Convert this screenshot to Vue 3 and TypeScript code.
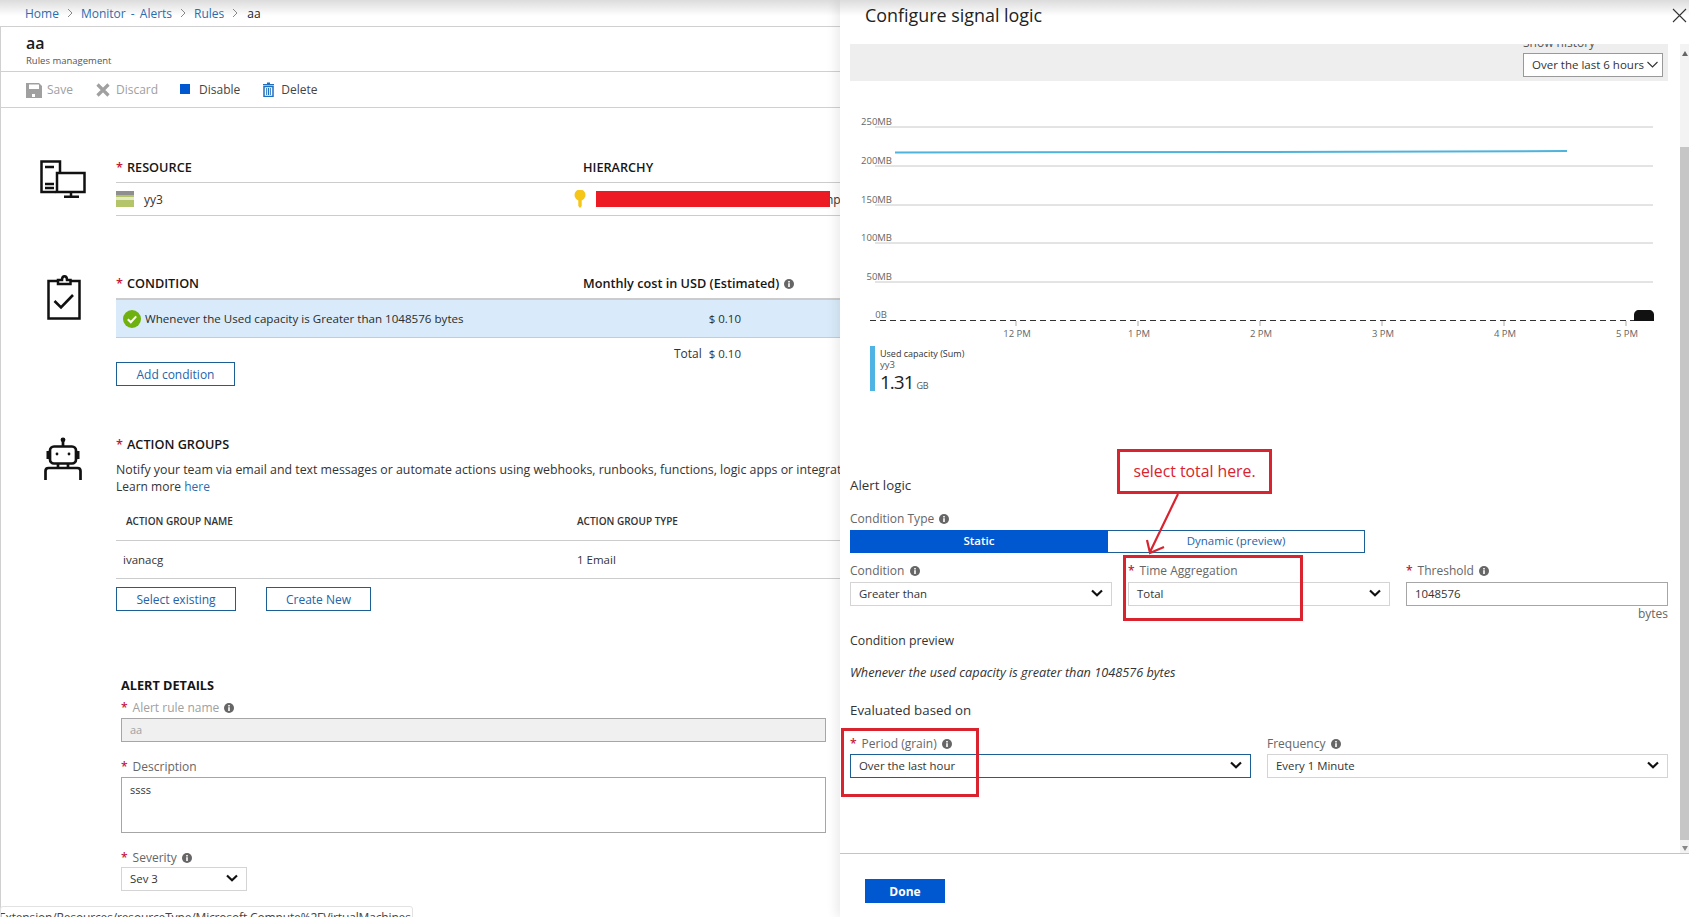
<script setup lang="ts">
const gridLines: { y: number; label: string }[] = [
  { y: 46, label: '250MB' },
  { y: 85, label: '200MB' },
  { y: 124, label: '150MB' },
  { y: 162, label: '100MB' },
  { y: 201, label: '50MB' }
]
const ticks: { x: number; label: string }[] = [
  { x: 167, label: '12 PM' },
  { x: 289, label: '1 PM' },
  { x: 411, label: '2 PM' },
  { x: 533, label: '3 PM' },
  { x: 655, label: '4 PM' },
  { x: 777, label: '5 PM' }
]
</script>

<template>
  <div class="root">
    <svg class="defs" width="0" height="0" aria-hidden="true">
      <symbol id="i-info" viewBox="0 0 10 10">
        <circle cx="5" cy="5" r="5" fill="#666" />
        <rect x="4.2" y="4.2" width="1.6" height="3.8" fill="#fff" />
        <rect x="4.2" y="2" width="1.6" height="1.5" fill="#fff" />
      </symbol>
      <symbol id="i-chev" viewBox="0 0 12 8">
        <path d="M1 1.5 L6 6.2 L11 1.5" fill="none" stroke="#111" stroke-width="2.2" />
      </symbol>
      <symbol id="i-crumb" viewBox="0 0 6 10">
        <path d="M1 1 L5 5 L1 9" fill="none" stroke="#888" stroke-width="1" />
      </symbol>
    </svg>

    <section class="left">
      <nav class="crumbs">
        <a>Home</a><svg class="cr"><use href="#i-crumb" /></svg><a>Monitor - Alerts</a><svg class="cr"><use href="#i-crumb" /></svg><a>Rules</a><svg class="cr"><use href="#i-crumb" /></svg><span>aa</span>
      </nav>
      <header class="head">
        <div class="title">aa</div>
        <div class="sub">Rules management</div>
      </header>
      <div class="toolbar">
        <span class="tool off save">
          <svg width="16" height="16" viewBox="0 0 16 16"><path d="M0 1h13l3 3v12H0z" fill="#a0a0a0" /><rect x="3" y="2.500" width="10" height="4.500" fill="#fff" /><rect x="6" y="12" width="3" height="3" fill="#fff" /></svg>
          Save
        </span>
        <span class="tool off discard">
          <svg width="14" height="14" viewBox="0 0 14 14"><path d="M1.500 1.500 L12.500 12.500 M12.500 1.500 L1.500 12.500" stroke="#a0a0a0" stroke-width="3.200" /></svg>
          Discard
        </span>
        <span class="tool disable"><b class="sq"></b>Disable</span>
        <span class="tool del">
          <svg width="11" height="15" viewBox="0 0 11 15"><path d="M4 0.500h3v1.500h4v1.300H0V2h4z" fill="#1f6fc0" /><path d="M1 4.500h9V14.500H1z" fill="none" stroke="#1f6fc0" stroke-width="1.500" /><path d="M3.700 6v7M5.500 6v7M7.300 6v7" stroke="#1f6fc0" stroke-width="1" /></svg>
          Delete
        </span>
      </div>

      <div class="sec sec-res">
        <div class="ico">
          <svg width="46" height="38" viewBox="0 0 46 38" fill="none" stroke="#111" stroke-width="2.500">
            <path d="M16 32H1.500V1.500H20V13" />
            <path d="M5 7h9M5 24h9M5 28h9" />
            <rect x="17" y="13" width="27.500" height="19" fill="#fff" />
            <path d="M31 32v4M24 36.800h15" />
          </svg>
        </div>
        <div class="body">
          <div class="hd"><span class="hcol"><em>*</em>RESOURCE</span><span>HIERARCHY</span></div>
          <div class="resrow">
            <span class="rescol">
              <svg width="18" height="16" viewBox="0 0 18 16"><rect width="18" height="16" fill="#b4c468" /><rect width="18" height="4" fill="#8f8f8f" /><rect y="6" width="18" height="3" fill="#e4ebc4" /></svg>
              <span>yy3</span>
            </span>
            <svg class="key" width="12" height="18" viewBox="0 0 12 18"><circle cx="6" cy="5" r="5.500" fill="#f5c518" /><path d="M4.300 8h3.400v8L6 18l-1.700-2z" fill="#f5c518" /></svg>
            <span class="redact"></span><span class="np">np</span>
          </div>
        </div>
      </div>

      <div class="sec sec-cond">
        <div class="ico">
          <svg width="34" height="46" viewBox="0 0 34 46" fill="none" stroke="#111" stroke-width="2.500">
            <path d="M11 7H1.500V44.500H32.500V7H23" />
            <path d="M11 10V6h4c0-5 5-5 5 0h3.500v4z" />
            <path d="M7.500 27l6.500 6.500L26 21" stroke-width="2.600" />
          </svg>
        </div>
        <div class="body">
          <div class="hd"><span class="hcol"><em>*</em>CONDITION</span><span>Monthly cost in USD (Estimated) <svg class="info"><use href="#i-info" /></svg></span></div>
          <div class="condrow">
            <svg width="18" height="18" viewBox="0 0 18 18"><circle cx="9" cy="9" r="9" fill="#6fb10f" /><path d="M4.800 9.200l3 3 5.400-5.800" fill="none" stroke="#fff" stroke-width="2" /></svg>
            <span class="condtext">Whenever the Used capacity is Greater than 1048576 bytes</span>
            <span class="cost">$ 0.10</span>
          </div>
          <div class="total"><span>Total</span><span class="price">$ 0.10</span></div>
          <button class="btn add">Add condition</button>
        </div>
      </div>

      <div class="sec sec-act">
        <div class="ico">
          <svg width="38" height="44" viewBox="0 0 38 44" fill="none" stroke="#111" stroke-width="2.700">
            <circle cx="19" cy="2.800" r="2.400" fill="#111" stroke="none" />
            <path d="M19 4v5" />
            <rect x="6" y="9.500" width="26" height="17" rx="4" />
            <circle cx="13" cy="17" r="1.400" fill="#111" stroke="none" />
            <circle cx="25" cy="17" r="1.400" fill="#111" stroke="none" />
            <path d="M4 14v8M34 14v8" stroke-width="3" />
            <path d="M14 27v4M24 27v4" />
            <path d="M1.500 43V34c0-2 1-3 3-3h29c2 0 3 1 3 3v9" />
          </svg>
        </div>
        <div class="body">
          <div class="hd plain"><span class="hcol"><em>*</em>ACTION GROUPS</span></div>
          <p class="notify">Notify your team via email and text messages or automate actions using webhooks, runbooks, functions, logic apps or integrating with external ITSM solutions.</p>
          <p class="learn">Learn more <a>here</a></p>
          <div class="thead"><span>ACTION GROUP NAME</span><span>ACTION GROUP TYPE</span></div>
          <div class="trow"><span>ivanacg</span><span>1 Email</span></div>
          <div class="btns">
            <button class="btn sel-ex">Select existing</button>
            <button class="btn create">Create New</button>
          </div>
        </div>
      </div>

      <div class="details">
        <div class="dhead">ALERT DETAILS</div>
        <div class="label first muted"><em>*</em>Alert rule name <svg class="info"><use href="#i-info" /></svg></div>
        <div class="field disabled">aa</div>
        <div class="label"><em>*</em>Description</div>
        <div class="field area">ssss</div>
        <div class="label"><em>*</em>Severity <svg class="info"><use href="#i-info" /></svg></div>
        <div class="sel sev"><span>Sev 3</span><svg class="chev"><use href="#i-chev" /></svg></div>
      </div>
    </section>

    <section class="right">
      <header class="r-head">
        <h1>Configure signal logic</h1>
        <svg class="close" width="15" height="15" viewBox="0 0 15 15"><path d="M1 1L14 14M14 1L1 14" stroke="#333" stroke-width="1.100" /></svg>
      </header>
      <div class="r-mid">
        <div class="r-content">
          <div class="band">
            <div class="band-col">
              <div class="hist">Show history</div>
              <div class="histsel"><span>Over the last 6 hours</span><svg width="11" height="7" viewBox="0 0 11 7"><path d="M0.500 1L5.500 6L10.500 1" fill="none" stroke="#333" stroke-width="1.100" /></svg></div>
            </div>
          </div>

          <svg class="chart" width="818" height="265" viewBox="0 0 818 265">
            <g v-for="g in gridLines" :key="g.label">
              <line x1="25" x2="803" :y1="g.y" :y2="g.y" stroke="#c8c8c8" />
              <text x="42" :y="g.y - 2" text-anchor="end" class="axis">{{ g.label }}</text>
            </g>
            <path d="M45 71.500 L400 71 L717 70" fill="none" stroke="#4fb3dc" stroke-width="2" />
            <line x1="20" x2="800" y1="239.500" y2="239.500" stroke="#333" stroke-dasharray="6 4" />
            <text x="31" y="237" class="axis" text-anchor="middle">0B</text>
            <g v-for="t in ticks" :key="t.label">
              <line :x1="t.x - 1" :x2="t.x - 1" y1="240" y2="245" stroke="#aaa" />
              <text :x="t.x" y="256" class="axis" text-anchor="middle">{{ t.label }}</text>
            </g>
            <path d="M784 234c0-3 2-5 5-5h10c3 0 5 2 5 5v6h-20z" fill="#111" />
          </svg>

          <div class="legend">
            <span class="lbar"></span>
            <div>
              <div class="l1">Used capacity (Sum)</div>
              <div class="l2">yy3</div>
              <div class="l3">1.31<small>GB</small></div>
            </div>
          </div>

          <div class="r-title alert">Alert logic</div>
          <div class="label ctype">Condition Type <svg class="info"><use href="#i-info" /></svg></div>
          <div class="toggle"><span class="on">Static</span><span class="offt">Dynamic (preview)</span></div>

          <div class="grid3">
            <div>
              <div class="label">Condition <svg class="info"><use href="#i-info" /></svg></div>
              <div class="sel"><span>Greater than</span><svg class="chev"><use href="#i-chev" /></svg></div>
            </div>
            <div>
              <div class="label"><em>*</em>Time Aggregation</div>
              <div class="sel"><span>Total</span><svg class="chev"><use href="#i-chev" /></svg></div>
            </div>
            <div>
              <div class="label"><em>*</em>Threshold <svg class="info"><use href="#i-info" /></svg></div>
              <div class="sel strong"><span>1048576</span></div>
              <div class="bytes">bytes</div>
            </div>
          </div>

          <div class="r-title preview">Condition preview</div>
          <div class="italic">Whenever the used capacity is greater than 1048576 bytes</div>
          <div class="r-title evald">Evaluated based on</div>

          <div class="grid2">
            <div>
              <div class="label"><em>*</em>Period (grain) <svg class="info"><use href="#i-info" /></svg></div>
              <div class="sel focus"><span>Over the last hour</span><svg class="chev"><use href="#i-chev" /></svg></div>
            </div>
            <div>
              <div class="label">Frequency <svg class="info"><use href="#i-info" /></svg></div>
              <div class="sel"><span>Every 1 Minute</span><svg class="chev"><use href="#i-chev" /></svg></div>
            </div>
          </div>
        </div>
        <div class="scrollbar">
          <span class="arr up"></span>
          <span class="thumb"></span>
          <span class="arr down"></span>
        </div>
      </div>
      <footer class="r-foot"><button class="done">Done</button></footer>
    </section>

    <div class="status">Extension/Resources/resourceType/Microsoft.Compute%2FVirtualMachines</div>

    <div class="note">select total here.</div>
    <div class="mark m-time"></div>
    <div class="mark m-period"></div>
    <svg class="arrow" width="50" height="70" viewBox="0 0 50 70">
      <path d="M39 1L11 59M8 47L11 60L25 54" fill="none" stroke="#d9232e" stroke-width="2.200" />
    </svg>
  </div>
</template>

<style>
html, body { margin: 0; padding: 0; background: #fff; }
</style>

<style scoped>
.root {
  position: relative;
  display: flex;
  width: 1689px;
  height: 917px;
  overflow: hidden;
  background: #fff;
  color: #333;
  font-family: "Open Sans", "Noto Sans", "Liberation Sans", sans-serif;
  font-size: 12px;
}
.defs { position: absolute; }
a { color: #2b6cb0; }
em { color: #c4183c; font-style: normal; font-weight: 600; margin-right: 5px; }
p { margin: 0; }

.left {
  width: 840px;
  flex: none;
  background: linear-gradient(#dcdcdc, #fff 16px);
  overflow: hidden;
}
.crumbs {
  height: 26px;
  border-bottom: 1px solid #d0d0d0;
  padding-left: 25px;
  display: flex;
  align-items: center;
  font-size: 12px;
  word-spacing: 2px;
}
.cr { width: 6px; height: 10px; margin: 0 8px; flex: none; }
.crumbs span { color: #222; margin-left: 1px; }
.head {
  height: 45px;
  box-sizing: border-box;
  border-bottom: 1px solid #d0d0d0;
  border-left: 1px solid #d0d0d0;
  padding: 6px 0 0 25px;
}
.title { font-size: 16px; line-height: 20px; font-weight: 600; color: #1a1a1a; }
.sub { font-size: 9.500px; line-height: 16px; color: #555; }
.toolbar {
  height: 36px;
  box-sizing: border-box;
  border-bottom: 1px solid #d0d0d0;
  border-left: 1px solid #d0d0d0;
  padding-left: 25px;
  display: flex;
  align-items: center;
  color: #444;
}
.tool { display: inline-flex; align-items: center; gap: 5px; margin-right: 23px; }
.tool.off { color: #a0a0a0; }
.tool.disable { margin-left: 1px; gap: 9px; margin-right: 23px; }
.tool.discard { gap: 6px; margin-right: 21px; }
.tool.del { gap: 7px; }
.sq { width: 10px; height: 10px; background: #0058d1; margin-top: -2px; }

.sec { display: flex; border-left: 1px solid #d0d0d0; }
.ico { width: 115px; flex: none; box-sizing: border-box; }
.body { width: 724px; flex: none; }
.sec-res { padding-top: 47px; height: 62px; }
.sec-res .ico { padding: 5px 0 0 39px; }
.sec-cond { padding-top: 54px; }
.sec-cond .ico { padding: 3px 0 0 46px; }
.sec-act { padding-top: 46px; }
.sec-act .ico { padding: 5px 0 0 43px; }

.hd {
  display: flex;
  height: 28px;
  box-sizing: border-box;
  line-height: 25px;
  border-bottom: 1px solid #ccc;
  font-size: 12.700px;
  font-weight: 600;
  color: #161616;
}
.hd em { margin-right: 4px; }
.hd.plain { border-bottom: none; height: 24px; }
.hcol { width: 467px; flex: none; }
.resrow {
  height: 33px;
  box-sizing: border-box;
  border-bottom: 1px solid #ccc;
  display: flex;
  align-items: center;
}
.rescol { width: 458px; flex: none; display: flex; align-items: center; gap: 10px; }
.key { flex: none; }
.redact { width: 234px; height: 16px; margin-left: 10px; background: #ed1c24; position: relative; flex: none; }
.np { margin-left: -4px; white-space: nowrap; }

.condrow {
  height: 39px;
  box-sizing: border-box;
  background: #d9ebfa;
  border-top: 1px solid #c6ccd2;
  border-bottom: 1px solid #c6ccd2;
  padding-left: 7px;
  display: flex;
  align-items: center;
  color: #2b2b2b;
}
.condtext { margin-left: 4px; width: 552px; flex: none; white-space: nowrap; font-size: 11.600px; }
.cost { width: 44px; text-align: right; flex: none; font-size: 11.500px; }
.total {
  height: 24px;
  box-sizing: border-box;
  padding-top: 8px;
  line-height: 16px;
  width: 625px;
  display: flex;
  justify-content: flex-end;
  gap: 7px;
}
.price { font-size: 11.500px; }
.btn {
  height: 24px;
  box-sizing: border-box;
  background: #fff;
  border: 1px solid #1c5f94;
  color: #2464a8;
  font: inherit;
  padding: 0;
  display: block;
}
.add { width: 119px; }
.notify { margin-top: 5px; line-height: 17px; white-space: nowrap; font-size: 12.350px; }
.learn { line-height: 17px; }
.thead {
  margin-top: 16px;
  height: 30px;
  box-sizing: border-box;
  line-height: 20px;
  border-bottom: 1px solid #ccc;
  padding-left: 10px;
  display: flex;
  font-size: 10px;
  font-weight: 600;
}
.thead span:first-child { width: 451px; flex: none; }
.trow {
  height: 38px;
  box-sizing: border-box;
  border-bottom: 1px solid #ccc;
  padding-left: 7px;
  display: flex;
  align-items: center;
  font-size: 11.500px;
}
.trow span:first-child { width: 454px; flex: none; }
.btns { display: flex; gap: 30px; margin-top: 8px; }
.sel-ex { width: 120px; }
.create { width: 105px; }

.details { border-left: 1px solid #d0d0d0; padding: 64px 0 40px 120px; }
.dhead { font-weight: 700; font-size: 12.700px; line-height: 20px; color: #161616; }
.label { height: 20px; line-height: 20px; color: #666; white-space: nowrap; }
.label.muted { color: #a0a0a0; }
.details .label { margin-top: 14px; line-height: 22px; }
.details .label.first { margin-top: 2px; }
.info { width: 10px; height: 10px; margin-left: 2px; vertical-align: -1px; }
.field {
  width: 705px;
  height: 24px;
  box-sizing: border-box;
  margin-top: 1px;
  border: 1px solid #a6a6a6;
  padding-left: 8px;
  line-height: 22px;
}
.field.disabled { background: #f0f0f0; color: #a0a0a0; font-size: 11px; }
.field.area { height: 56px; line-height: 16px; padding-top: 4px; font-size: 11px; }
.sel {
  height: 24px;
  box-sizing: border-box;
  border: 1px solid #d4d4d4;
  padding: 0 8px 2px;
  display: flex;
  align-items: center;
  justify-content: space-between;
  background: #fff;
  color: #333;
  font-size: 11.400px;
}
.sel.strong { border-color: #a6a6a6; }
.sel.focus { border-color: #1c5f94; }
.sev { width: 126px; }
.chev { width: 12px; height: 8px; flex: none; }

.right {
  width: 849px;
  flex: none;
  position: relative;
  background: linear-gradient(#dcdcdc, #fff 16px);
  box-shadow: -4px 0 10px rgba(0, 0, 0, 0.08);
}
.r-head {
  height: 44px;
  box-sizing: border-box;
  padding: 0 2px 15px 25px;
  display: flex;
  align-items: center;
  justify-content: space-between;
}
.r-head h1 { margin: 0; font-size: 17.900px; font-weight: 400; color: #222; }
.close { margin-top: 1px; }
.r-mid { height: 809px; display: flex; border-bottom: 1px solid #c4c4c4; }
.r-content { width: 840px; flex: none; box-sizing: border-box; padding: 0 12px 0 10px; overflow: hidden; }
.band { height: 37px; background: #eee; overflow: hidden; }
.band-col { width: 140px; margin: -9px 0 0 673px; }
.hist { height: 16px; line-height: 16px; color: #555; }
.histsel {
  margin-top: 2px;
  height: 24px;
  box-sizing: border-box;
  border: 1px solid #999;
  background: #fff;
  padding: 0 4px 2px 8px;
  display: flex;
  align-items: center;
  justify-content: space-between;
  white-space: nowrap;
  font-size: 11.500px;
  color: #333;
}
.chart { display: block; }
.axis { font-size: 9.500px; fill: #666; font-family: "Open Sans", "Noto Sans", sans-serif; }
.legend { margin-left: 20px; display: flex; gap: 5px; height: 45px; }
.lbar { width: 5px; height: 45px; background: #4fb3e3; }
.l1 { font-size: 9px; line-height: 15px; color: #333; }
.l2 { font-size: 9.500px; line-height: 8px; color: #555; }
.l3 { font-size: 19px; line-height: 27px; color: #222; letter-spacing: -1px; }
.l3 small { font-size: 9px; letter-spacing: -0.300px; color: #555; margin-left: 3px; }

.r-title { height: 20px; line-height: 20px; color: #333; }
.alert { margin-top: 85px; font-size: 13.300px; line-height: 18px; }
.ctype { margin-top: 13px; }
.toggle {
  margin-top: 1px;
  width: 515px;
  height: 23px;
  box-sizing: border-box;
  border: 1px solid #1c5f94;
  display: flex;
  font-size: 11.500px;
  line-height: 19px;
  text-align: center;
}
.toggle .on { width: 258px; background: #0058d1; color: #fff; font-weight: 600; margin: -1px 0 -1px -1px; line-height: 21px; }
.toggle .offt { flex: 1; color: #2464a8; }
.grid3 {
  margin-top: 9px;
  display: grid;
  grid-template-columns: 262px 262px 262px;
  column-gap: 16px;
}
.grid3 .label { line-height: 18px; }
.bytes { height: 16px; line-height: 16px; text-align: right; color: #666; }
.preview { margin-top: 9px; font-size: 12.300px; }
.italic { margin-top: 12px; height: 20px; line-height: 19px; font-style: italic; color: #333; font-size: 12.700px; }
.evald { margin-top: 18px; font-size: 13.300px; line-height: 18px; }
.grid2 {
  margin-top: 13px;
  display: grid;
  grid-template-columns: 401px 401px;
  column-gap: 16px;
}

.scrollbar {
  width: 9px;
  flex: none;
  background: #f3f3f3;
  display: flex;
  flex-direction: column;
  align-items: center;
}
.thumb { width: 9px; height: 693px; background: #c6c6c6; margin: 91px 0 6px; }
.arr { width: 0; height: 0; border-left: 3.500px solid transparent; border-right: 3.500px solid transparent; }
.arr.up { border-bottom: 5px solid #666; margin-top: 7px; }
.arr.down { border-top: 5px solid #888; }
.r-foot { height: 63px; box-sizing: border-box; padding: 25px 0 0 25px; }
.done {
  width: 80px;
  height: 24px;
  border: 0;
  padding: 0;
  background: #0058d1;
  color: #fff;
  font: inherit;
  font-weight: 700;
  display: block;
}

.status {
  position: absolute;
  left: 0;
  top: 906px;
  width: 413px;
  height: 30px;
  box-sizing: border-box;
  background: #fff;
  border: 1px solid #e2e2e2;
  border-radius: 3px;
  padding: 3px 0 0 0;
  text-indent: -2px;
  font-size: 12px;
  letter-spacing: -0.150px;
  line-height: 16px;
  color: #444;
  white-space: nowrap;
  overflow: hidden;
}
.note {
  position: absolute;
  left: 1117px;
  top: 449px;
  width: 155px;
  height: 45px;
  box-sizing: border-box;
  border: 3px solid #d9232e;
  color: #d9232e;
  font-size: 15.800px;
  line-height: 39px;
  text-align: center;
  background: #fff;
}
.mark { position: absolute; box-sizing: border-box; border: 3px solid #d9232e; }
.m-time { left: 1123px; top: 555px; width: 180px; height: 66px; }
.m-period { left: 841px; top: 728px; width: 138px; height: 69px; }
.arrow { position: absolute; left: 1139px; top: 493px; }
</style>
